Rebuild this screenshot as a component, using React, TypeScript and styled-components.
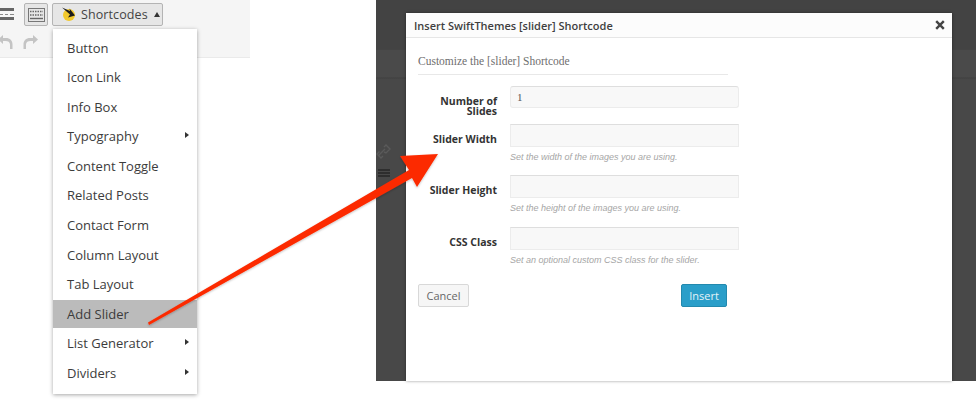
import React from 'react';
import styled, { createGlobalStyle } from 'styled-components';

const Global = createGlobalStyle`
  html, body { margin: 0; padding: 0; background: #fff; }
  body { font-family: "Open Sans", "Liberation Sans", sans-serif; }
`;

const Page = styled.div`
  position: relative;
  display: flex;
  width: 976px;
  height: 402px;
  overflow: hidden;
`;

const EditorSide = styled.div`
  position: relative;
  width: 376px;
  flex: none;
`;

const Toolbar = styled.div`
  width: 250px;
  height: 58px;
  box-sizing: border-box;
  background: #f5f5f5;
  border-bottom: 1px solid #eaeaea;
  padding-top: 3px;
`;

const ToolRow = styled.div`
  display: flex;
  align-items: center;
  height: 23px;
`;

const UndoRow = styled.div`
  display: flex;
  align-items: center;
  gap: 10px;
  margin-top: 8px;
  margin-left: -3px;
  height: 16px;
`;

const PlainTool = styled.div`
  width: 14px;
  height: 13px;
  margin-right: 10px;
  display: flex;
`;

const ToolButton = styled.div`
  box-sizing: border-box;
  height: 23px;
  border: 1px solid #b4b4b4;
  border-radius: 2px;
  background: #e6e6e6;
  display: flex;
  align-items: center;
`;

const KeyButton = styled(ToolButton)`
  width: 24px;
  justify-content: center;
  margin-right: 4px;
`;

const ShortcodeButton = styled(ToolButton)`
  width: 111px;
  padding-left: 4px;
  font-size: 12.5px;
  color: #444;
`;

const ButtonLabel = styled.span`
  margin-left: 2px;
  letter-spacing: 0.1px;
`;

const Caret = styled.span`
  margin-left: 6px;
  width: 0;
  height: 0;
  border-left: 3.5px solid transparent;
  border-right: 3.5px solid transparent;
  border-bottom: 5px solid #333;
`;

const Menu = styled.ul`
  position: absolute;
  left: 53px;
  top: 29px;
  width: 144px;
  height: 365px;
  box-sizing: border-box;
  margin: 0;
  padding: 4.5px 0 0;
  list-style: none;
  background: #fff;
  box-shadow: 0 1px 4px rgba(0, 0, 0, 0.35);
`;

const MenuItem = styled.li<{ $active?: boolean }>`
  position: relative;
  height: 29.6px;
  box-sizing: border-box;
  padding-left: 14px;
  font-size: 13px;
  line-height: 29px;
  color: #3c3c3c;
  background: ${(p) => (p.$active ? 'linear-gradient(#bbb, #bbb) no-repeat 0 0 / 100% 28px' : 'transparent')};
`;

const SubArrow = styled.span`
  position: absolute;
  right: 8px;
  top: 10px;
  width: 0;
  height: 0;
  border-top: 3.5px solid transparent;
  border-bottom: 3.5px solid transparent;
  border-left: 4px solid #333;
`;

const DarkPanel = styled.div`
  position: relative;
  width: 600px;
  height: 381px;
  box-sizing: border-box;
  padding: 13px 24px 0 30px;
  background: linear-gradient(
    to bottom,
    #434343 0,
    #434343 49px,
    #3e3e3e 49px,
    #4a4a4a 50px,
    #4a4a4a 77px,
    #3f3f3f 78px,
    #484848 79px,
    #484848 100%
  );
`;

const GhostIcons = styled.svg`
  position: absolute;
  left: 0;
  top: 144px;
`;

const Modal = styled.div`
  position: relative;
  height: 368px;
  background: #fff;
  box-shadow: 0 0 3px rgba(0, 0, 0, 0.4);
`;

const ModalHeader = styled.div`
  position: relative;
  height: 24px;
  padding: 0 8px;
  display: flex;
  align-items: center;
  background: #fcfcfc;
  border-bottom: 1px solid #e6e6e6;
`;

const ModalTitle = styled.div`
  font-size: 11px;
  font-weight: 600;
  color: #3f3f3f;
`;

const CloseMark = styled.svg`
  position: absolute;
  right: 7px;
  top: 7px;
`;

const ModalBody = styled.div`
  padding: 0 12px;
`;

const Subtitle = styled.div`
  width: 310px;
  height: 37px;
  box-sizing: border-box;
  padding-top: 16px;
  border-bottom: 1px solid #e8e8e8;
  font-family: "Liberation Serif", serif;
  font-size: 11.5px;
  line-height: 14px;
  color: #6e6e6e;
`;

const Field = styled.div<{ $top: number }>`
  display: flex;
  margin-top: ${(p) => p.$top}px;
`;

const FieldLabel = styled.div`
  width: 79px;
  flex: none;
  margin-right: 13px;
  padding-top: 10px;
  text-align: right;
  font-size: 10.5px;
  font-weight: 700;
  line-height: 10px;
  color: #333;
`;

const FieldInput = styled.div<{ $round?: boolean }>`
  box-sizing: border-box;
  width: 229px;
  height: ${(p) => (p.$round ? 22 : 23)}px;
  padding: 3px 6px;
  background: #f8f8f8;
  border: 1px solid #ececec;
  border-top-color: #dedede;
  border-radius: ${(p) => (p.$round ? 3 : 0)}px;
  font-family: "Liberation Serif", serif;
  font-size: 11px;
  line-height: 14px;
  color: #555;
`;

const FieldMain = styled.div``;

const Hint = styled.div`
  margin-top: 5px;
  font-family: "Liberation Sans", sans-serif;
  font-style: italic;
  font-size: 9px;
  line-height: 11px;
  color: #a6a6a6;
`;

const Actions = styled.div`
  display: flex;
  justify-content: space-between;
  width: 309px;
  margin-top: 18px;
`;

const Button = styled.div`
  box-sizing: border-box;
  height: 23px;
  border-radius: 2px;
  font-size: 11px;
  line-height: 21px;
  text-align: center;
`;

const CancelButton = styled(Button)`
  width: 51px;
  background: #f6f6f6;
  border: 1px solid #d8d8d8;
  color: #666;
`;

const InsertButton = styled(Button)`
  width: 46px;
  background: #2a9ec9;
  border: 1px solid #2389ae;
  color: #e4f3f8;
`;

const ArrowLayer = styled.svg`
  position: absolute;
  left: 0;
  top: 0;
  pointer-events: none;
`;

const items: [string, boolean?, boolean?][] = [
  ['Button'],
  ['Icon Link'],
  ['Info Box'],
  ['Typography', true],
  ['Content Toggle'],
  ['Related Posts'],
  ['Contact Form'],
  ['Column Layout'],
  ['Tab Layout'],
  ['Add Slider', false, true],
  ['List Generator', true],
  ['Dividers', true],
];

export default function App() {
  return (
    <Page>
      <Global />
      <EditorSide>
        <Toolbar>
          <ToolRow>
            <PlainTool>
              <svg width="14" height="13" viewBox="0 0 14 13">
                <rect y="0" width="14" height="3" fill="#666" />
                <path d="M0 6.5h3M5 6.5h3M10 6.5h4" stroke="#888" strokeWidth="1" />
                <rect y="9" width="14" height="3" fill="#666" />
              </svg>
            </PlainTool>
            <KeyButton>
              <svg width="17" height="14" viewBox="0 0 17 14">
                <rect x="0.5" y="0.5" width="16" height="13" fill="#e6e6e6" stroke="#777" />
                <path d="M2 3.5h13" stroke="#666" strokeWidth="1.4" strokeDasharray="1.5 1" />
                <path d="M2 7h13" stroke="#666" strokeWidth="1.4" strokeDasharray="1.5 1" />
                <path d="M2 10.5h13" stroke="#666" strokeWidth="1.4" />
              </svg>
            </KeyButton>
            <ShortcodeButton>
              <svg width="22" height="17" viewBox="0 0 22 17">
                <circle cx="12" cy="9" r="6" fill="#f2c92e" />
                <path d="M5 1.5 L13 5 L12.5 2.5 L18 9.5 L11 11.5 L13 8.5 Z" fill="#1c1c1c" />
              </svg>
              <ButtonLabel>Shortcodes</ButtonLabel>
              <Caret />
            </ShortcodeButton>
          </ToolRow>
          <UndoRow>
            <svg width="16" height="16" viewBox="0 0 16 16">
              <path d="M13 15V10.5C13 8 11 7 8.5 7H6V10L1 5.5L6 1V4H9C13 4 15.5 6.5 15.5 10.5V15Z" fill="#c4c4c4" />
            </svg>
            <svg width="16" height="16" viewBox="0 0 16 16">
              <path d="M3 15V10.5C3 8 5 7 7.5 7H10V10L15 5.5L10 1V4H7C3 4 0.5 6.5 0.5 10.5V15Z" fill="#c4c4c4" />
            </svg>
          </UndoRow>
        </Toolbar>
        <Menu>
          {items.map(([label, sub, active]) => (
            <MenuItem key={label} $active={active}>
              {label}
              {sub && <SubArrow />}
            </MenuItem>
          ))}
        </Menu>
      </EditorSide>
      <DarkPanel>
        <GhostIcons width="16" height="40" viewBox="0 0 16 40">
          <path d="M3 11l6-6M1.5 9.5l2-2M8 3l2-2 4 4-4 4-2-1M7 12l-2 2-4-4 2-2" stroke="#5a5a5a" strokeWidth="1.4" fill="none" />
          <path d="M2 26h12M2 29h12M2 32h12" stroke="#262626" strokeWidth="1.3" />
        </GhostIcons>
        <Modal>
          <ModalHeader>
            <ModalTitle>Insert SwiftThemes [slider] Shortcode</ModalTitle>
            <CloseMark width="10" height="10" viewBox="0 0 10 10">
              <path d="M1.2 1.2L8.8 8.8M8.8 1.2L1.2 8.8" stroke="#444" strokeWidth="2.4" />
            </CloseMark>
          </ModalHeader>
          <ModalBody>
            <Subtitle>Customize the [slider] Shortcode</Subtitle>
            <Field $top={11}>
              <FieldLabel>Number of Slides</FieldLabel>
              <FieldMain>
                <FieldInput $round>1</FieldInput>
              </FieldMain>
            </Field>
            <Field $top={8}>
              <FieldLabel>Slider Width</FieldLabel>
              <FieldMain>
                <FieldInput />
                <Hint>Set the width of the images you are using.</Hint>
              </FieldMain>
            </Field>
            <Field $top={12}>
              <FieldLabel>Slider Height</FieldLabel>
              <FieldMain>
                <FieldInput />
                <Hint>Set the height of the images you are using.</Hint>
              </FieldMain>
            </Field>
            <Field $top={13}>
              <FieldLabel>CSS Class</FieldLabel>
              <FieldMain>
                <FieldInput />
                <Hint>Set an optional custom CSS class for the slider.</Hint>
              </FieldMain>
            </Field>
            <Actions>
              <CancelButton>Cancel</CancelButton>
              <InsertButton>Insert</InsertButton>
            </Actions>
          </ModalBody>
        </Modal>
      </DarkPanel>
      <ArrowLayer width="976" height="402" viewBox="0 0 976 402">
        <defs>
          <filter id="arrowShadow" x="-5%" y="-5%" width="110%" height="110%">
            <feDropShadow dx="0" dy="1" stdDeviation="1" floodColor="#000" floodOpacity="0.25" />
          </filter>
        </defs>
        <polygon
          points="148,322.5 409,170 400,156 438,154 417,187 412,178 149,325"
          fill="#fc2c06"
          filter="url(#arrowShadow)"
        />
      </ArrowLayer>
    </Page>
  );
}
